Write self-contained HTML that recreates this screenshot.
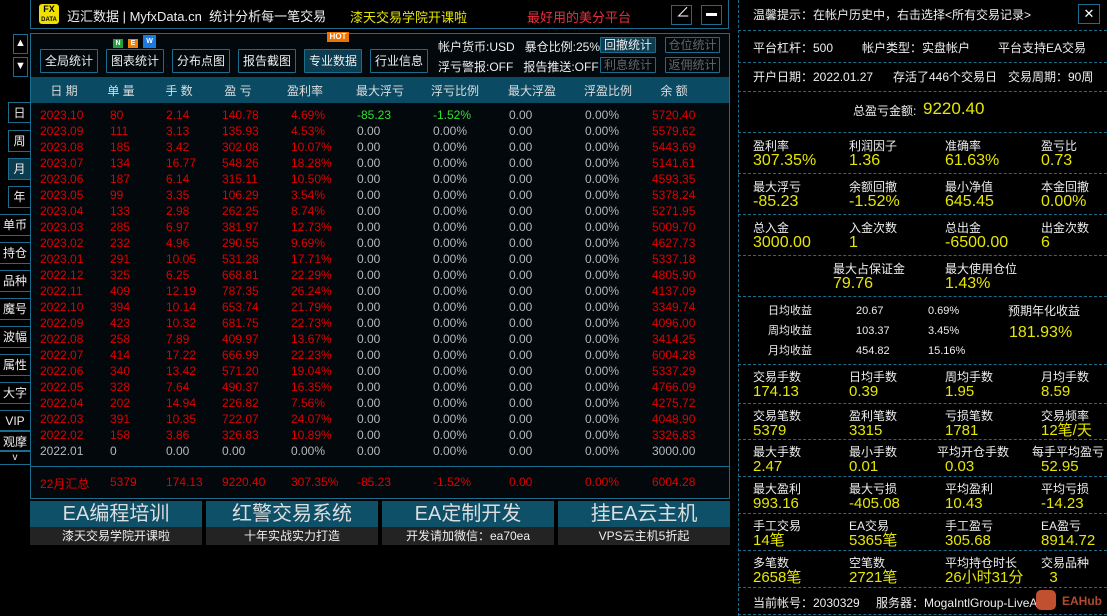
<!DOCTYPE html>
<html><head><meta charset="utf-8"><style>
*{margin:0;padding:0;box-sizing:border-box}
body{width:1107px;height:616px;background:#000;position:relative;overflow:hidden;font-family:"Liberation Sans","Noto Sans CJK SC",sans-serif;font-size:12px;color:#e8e8e8}
.a{position:absolute;white-space:nowrap}
.bx{position:absolute;border:1px solid #1a6d8c}
.btn{position:absolute;border:1px solid #1a6d8c;color:#eee;font-size:12px;text-align:center;line-height:22px;border-radius:1px}
.sb{position:absolute;left:0;width:31px;border:1px solid #1a6d8c;border-left:none;text-align:center;color:#eee;font-size:12px;line-height:20px}
.r{color:#e00000}.g{color:#b8b8b8}.gr{color:#2fe02f}
.hd{position:absolute;top:77px;left:31px;width:698px;height:26px;background:#0b4a63}
.hd span{position:absolute;top:5px;color:#ddd;font-size:12px;transform:translateX(-50%)}
.row{position:absolute;left:0;height:16px;font-size:12px;white-space:nowrap}
.row span{position:absolute;white-space:nowrap}
.dl{position:absolute;left:738px;width:369px;border-top:1px dashed #1a6d8c}
.lb{position:absolute;font-size:12px;color:#eee;white-space:nowrap;line-height:14px}
.vl{position:absolute;font-size:16px;color:#e6e600;white-space:nowrap;line-height:18px}
.bn{position:absolute;top:501px;width:172px;height:26px;background:#0d5068;color:#ddd;font-size:20px;text-align:center;line-height:26px}
.bs{position:absolute;top:527px;width:172px;height:18px;background:#232323;color:#eee;font-size:12px;text-align:center;line-height:18px}
</style></head><body>
<!-- header -->
<div class="bx" style="left:30px;top:0;width:699px;height:29px;border-top:none"></div>
<div class="a" style="left:39px;top:4px;width:20px;height:20px;background:#f0e000;border-radius:3px;color:#000;font-weight:bold;text-align:center;line-height:9px;font-size:9px;padding-top:1px">FX<br><span style="font-size:6px">DATA</span></div>
<div class="a" style="left:67px;top:6px;font-size:13px;color:#eee">迈汇数据 | MyfxData.cn&nbsp; 统计分析每一笔交易</div>
<div class="a" style="left:350px;top:7px;font-size:13px;color:#e6e600">漆天交易学院开课啦</div>
<div class="a" style="left:527px;top:7px;font-size:13px;color:#e83040">最好用的美分平台</div>
<div class="bx" style="left:671px;top:5px;width:21px;height:20px"></div>
<div class="a" style="left:676px;top:2px;font-size:14px;color:#fff">∠</div>
<div class="bx" style="left:701px;top:5px;width:21px;height:20px"></div>
<div class="a" style="left:706px;top:13px;width:11px;height:3px;background:#fff"></div>
<!-- left arrows -->
<div class="bx" style="left:13px;top:34px;width:15px;height:20px"></div><div class="a" style="left:15px;top:37px;font-size:11px;color:#fff">▲</div>
<div class="bx" style="left:13px;top:57px;width:15px;height:20px"></div><div class="a" style="left:15px;top:60px;font-size:11px;color:#fff">▼</div>
<div class="sb" style="left:8px;width:23px;top:102px;height:21px;border-left:1px solid #1a6d8c">日</div>
<div class="sb" style="left:8px;width:23px;top:130px;height:22px;border-left:1px solid #1a6d8c">周</div>
<div class="sb" style="left:8px;width:23px;top:158px;height:22px;border-left:1px solid #1a6d8c;background:#0c3c50">月</div>
<div class="sb" style="left:8px;width:23px;top:186px;height:22px;border-left:1px solid #1a6d8c">年</div>
<div class="sb" style="top:214px;height:22px">单币</div>
<div class="sb" style="top:242px;height:22px">持仓</div>
<div class="sb" style="top:270px;height:22px">品种</div>
<div class="sb" style="top:298px;height:22px">魔号</div>
<div class="sb" style="top:326px;height:22px">波幅</div>
<div class="sb" style="top:354px;height:22px">属性</div>
<div class="sb" style="top:382px;height:22px">大字</div>
<div class="sb" style="top:410px;height:21px">VIP</div>
<div class="sb" style="top:431px;height:20px">观摩</div>
<div class="sb" style="top:451px;height:14px;line-height:12px;font-size:10px">v</div>
<!-- main box -->
<div class="bx" style="left:30px;top:33px;width:700px;height:466px;background:#02080c"></div>
<div class="a" style="left:113px;top:39px;width:10px;height:9px;background:#22a040;color:#fff;font-size:7px;text-align:center;line-height:9px;font-weight:bold">N</div>
<div class="a" style="left:128px;top:39px;width:10px;height:9px;background:#f08000;color:#fff;font-size:7px;text-align:center;line-height:9px;font-weight:bold">E</div>
<div class="a" style="left:143px;top:35px;width:13px;height:13px;background:#1a7ae0;color:#fff;font-size:7px;text-align:center;line-height:13px;font-weight:bold">W</div>
<div class="a" style="left:327px;top:32px;width:22px;height:10px;background:#f07000;color:#fff;font-size:8px;text-align:center;line-height:10px;font-weight:bold">HOT</div>
<div class="btn" style="left:40px;top:49px;width:58px;height:24px">全局统计</div>
<div class="btn" style="left:106px;top:49px;width:58px;height:24px">图表统计</div>
<div class="btn" style="left:172px;top:49px;width:58px;height:24px">分布点图</div>
<div class="btn" style="left:238px;top:49px;width:58px;height:24px">报告截图</div>
<div class="btn" style="left:304px;top:49px;width:58px;height:24px;background:#0c3c50">专业数据</div>
<div class="btn" style="left:370px;top:49px;width:58px;height:24px">行业信息</div>
<div class="a" style="left:438px;top:38px;color:#eee">帐户货币:USD&nbsp;&nbsp; 暴仓比例:25%</div>
<div class="a" style="left:438px;top:58px;color:#eee">浮亏警报:OFF&nbsp;&nbsp; 报告推送:OFF</div>
<div class="btn" style="left:600px;top:37px;width:56px;height:16px;line-height:14px;background:#0c3c50">回撤统计</div>
<div class="btn" style="left:665px;top:37px;width:55px;height:16px;line-height:14px;color:#666">仓位统计</div>
<div class="btn" style="left:600px;top:57px;width:56px;height:16px;line-height:14px;color:#666">利息统计</div>
<div class="btn" style="left:665px;top:57px;width:55px;height:16px;line-height:14px;color:#666">返佣统计</div>
<div class="hd"><span style="left:33px">日 期</span><span style="left:90px">单 量</span><span style="left:148px">手 数</span><span style="left:207px">盈 亏</span><span style="left:274px">盈利率</span><span style="left:349px">最大浮亏</span><span style="left:424px">浮亏比例</span><span style="left:501px">最大浮盈</span><span style="left:577px">浮盈比例</span><span style="left:643px">余 额</span></div>
<div id="rows"></div>
<div class="a" style="left:31px;top:466px;width:698px;border-top:1px solid #1a6d8c"></div>
<div class="row" style="top:475px"><span class="r" style="left:40px">22月汇总</span><span class="r" style="left:110px">5379</span><span class="r" style="left:166px">174.13</span><span class="r" style="left:222px">9220.40</span><span class="r" style="left:291px">307.35%</span><span class="r" style="left:357px">-85.23</span><span class="r" style="left:433px">-1.52%</span><span class="r" style="left:509px">0.00</span><span class="r" style="left:585px">0.00%</span><span class="r" style="left:652px">6004.28</span></div>
<div class="bn" style="left:30px">EA编程培训</div><div class="bs" style="left:30px">漆天交易学院开课啦</div>
<div class="bn" style="left:206px">红警交易系统</div><div class="bs" style="left:206px">十年实战实力打造</div>
<div class="bn" style="left:382px">EA定制开发</div><div class="bs" style="left:382px">开发请加微信：ea70ea</div>
<div class="bn" style="left:558px">挂EA云主机</div><div class="bs" style="left:558px">VPS云主机5折起</div>
<!-- right panel -->
<div class="a" style="left:738px;top:0;height:616px;border-left:1px dashed #1a6d8c"></div>
<div class="lb" style="left:753px;top:8px">温馨提示：在帐户历史中，右击选择&lt;所有交易记录&gt;</div>
<div class="bx" style="left:1078px;top:4px;width:22px;height:20px;color:#fff;font-size:13px;text-align:center;line-height:18px">✕</div>
<div class="dl" style="top:30px"></div>
<div class="lb" style="left:753px;top:41px">平台杠杆：500</div><div class="lb" style="left:862px;top:41px">帐户类型：实盘帐户</div><div class="lb" style="left:998px;top:41px">平台支持EA交易</div>
<div class="dl" style="top:62px"></div>
<div class="lb" style="left:753px;top:70px">开户日期：2022.01.27</div><div class="lb" style="left:893px;top:70px">存活了446个交易日</div><div class="lb" style="left:1008px;top:70px">交易周期：90周</div>
<div class="dl" style="top:91px"></div>
<div class="lb" style="left:853px;top:104px">总盈亏金额:</div><div class="vl" style="left:923px;top:100px;font-size:17px">9220.40</div>
<div class="dl" style="top:132px"></div>
<div id="grid"></div>
<div class="lb" style="left:768px;top:304px;font-size:11px">日均收益</div><div class="lb" style="left:856px;top:304px;font-size:11px">20.67</div><div class="lb" style="left:928px;top:304px;font-size:11px">0.69%</div>
<div class="lb" style="left:768px;top:324px;font-size:11px">周均收益</div><div class="lb" style="left:856px;top:324px;font-size:11px">103.37</div><div class="lb" style="left:928px;top:324px;font-size:11px">3.45%</div>
<div class="lb" style="left:768px;top:344px;font-size:11px">月均收益</div><div class="lb" style="left:856px;top:344px;font-size:11px">454.82</div><div class="lb" style="left:928px;top:344px;font-size:11px">15.16%</div>
<div class="lb" style="left:1008px;top:304px">预期年化收益</div><div class="vl" style="left:1009px;top:324px">181.93%</div>
<div class="lb" style="left:753px;top:596px">当前帐号：2030329</div><div class="lb" style="left:876px;top:596px">服务器：MogaIntlGroup-LiveAs</div>
<div class="a" style="left:1036px;top:590px;width:20px;height:20px;border-radius:5px;background:#c05030"></div>
<div class="a" style="left:1062px;top:594px;font-size:12px;font-weight:bold;color:#b04a30">EAHub</div>
<script>
var d=[["2023.10",80,"2.14","140.78","4.69%","-85.23","-1.52%","5720.40"],["2023.09",111,"3.13","135.93","4.53%","0.00","0.00%","5579.62"],["2023.08",185,"3.42","302.08","10.07%","0.00","0.00%","5443.69"],["2023.07",134,"16.77","548.26","18.28%","0.00","0.00%","5141.61"],["2023.06",187,"6.14","315.11","10.50%","0.00","0.00%","4593.35"],["2023.05",99,"3.35","106.29","3.54%","0.00","0.00%","5378.24"],["2023.04",133,"2.98","262.25","8.74%","0.00","0.00%","5271.95"],["2023.03",285,"6.97","381.97","12.73%","0.00","0.00%","5009.70"],["2023.02",232,"4.96","290.55","9.69%","0.00","0.00%","4627.73"],["2023.01",291,"10.05","531.28","17.71%","0.00","0.00%","5337.18"],["2022.12",325,"6.25","668.81","22.29%","0.00","0.00%","4805.90"],["2022.11",409,"12.19","787.35","26.24%","0.00","0.00%","4137.09"],["2022.10",394,"10.14","653.74","21.79%","0.00","0.00%","3349.74"],["2022.09",423,"10.32","681.75","22.73%","0.00","0.00%","4096.00"],["2022.08",258,"7.89","409.97","13.67%","0.00","0.00%","3414.25"],["2022.07",414,"17.22","666.99","22.23%","0.00","0.00%","6004.28"],["2022.06",340,"13.42","571.20","19.04%","0.00","0.00%","5337.29"],["2022.05",328,"7.64","490.37","16.35%","0.00","0.00%","4766.09"],["2022.04",202,"14.94","226.82","7.56%","0.00","0.00%","4275.72"],["2022.03",391,"10.35","722.07","24.07%","0.00","0.00%","4048.90"],["2022.02",158,"3.86","326.83","10.89%","0.00","0.00%","3326.83"],["2022.01",0,"0.00","0.00","0.00%","0.00","0.00%","3000.00"]];
var h="";d.forEach(function(r,i){var c=i==21?"g":"r",y=108+i*16,f=i==0?"gr":"g";
h+='<div class="row" style="top:'+y+'px"><span class="'+c+'" style="left:40px">'+r[0]+'</span><span class="'+c+'" style="left:110px">'+r[1]+'</span><span class="'+c+'" style="left:166px">'+r[2]+'</span><span class="'+c+'" style="left:222px">'+r[3]+'</span><span class="'+c+'" style="left:291px">'+r[4]+'</span><span class="'+f+'" style="left:357px">'+r[5]+'</span><span class="'+f+'" style="left:433px">'+r[6]+'</span><span class="g" style="left:509px">0.00</span><span class="g" style="left:585px">0.00%</span><span class="'+c+'" style="left:652px">'+r[7]+'</span></div>';});
document.getElementById("rows").innerHTML=h;
var X=[753,849,945,1041];
var G=[[132,[["盈利率","307.35%"],["利润因子","1.36"],["准确率","61.63%"],["盈亏比","0.73"]],173],
[173,[["最大浮亏","-85.23"],["余额回撤","-1.52%"],["最小净值","645.45"],["本金回撤","0.00%"]],214],
[214,[["总入金","3000.00"],["入金次数","1"],["总出金","-6500.00"],["出金次数","6"]],255],
[255,[["",""],["最大占保证金","79.76",833],["最大使用仓位","1.43%"],["",""]],296],
[364,[["交易手数","174.13"],["日均手数","0.39"],["周均手数","1.95"],["月均手数","8.59"]],403],
[403,[["交易笔数","5379"],["盈利笔数","3315"],["亏损笔数","1781"],["交易频率","12笔/天"]],439],
[439,[["最大手数","2.47"],["最小手数","0.01"],["平均开仓手数","0.03",937],["每手平均盈亏","52.95",1032]],476],
[476,[["最大盈利","993.16"],["最大亏损","-405.08"],["平均盈利","10.43"],["平均亏损","-14.23"]],513],
[513,[["手工交易","14笔"],["EA交易","5365笔"],["手工盈亏","305.68"],["EA盈亏","8914.72"]],550],
[550,[["多笔数","2658笔"],["空笔数","2721笔"],["平均持仓时长","26小时31分"],["交易品种","&nbsp;&nbsp;3"]],587]];
var s="";G.forEach(function(g){var sm=g[0]>360;g[1].forEach(function(c,i){var x=c[2]||X[i];var vx=X[i];if(i==1&&c[2])vx=c[2];
s+='<div class="lb" style="left:'+x+'px;top:'+(g[0]+(sm?6:7))+'px">'+c[0]+'</div><div class="vl" style="left:'+vx+'px;top:'+(g[0]+(sm?19:20))+'px;font-size:'+(sm?15:16)+'px">'+c[1]+'</div>';});
s+='<div class="dl" style="top:'+g[2]+'px"></div>';});
s+='<div class="dl" style="top:364px"></div><div class="dl" style="top:614px"></div>';
document.getElementById("grid").innerHTML=s;
</script>
</body></html>
